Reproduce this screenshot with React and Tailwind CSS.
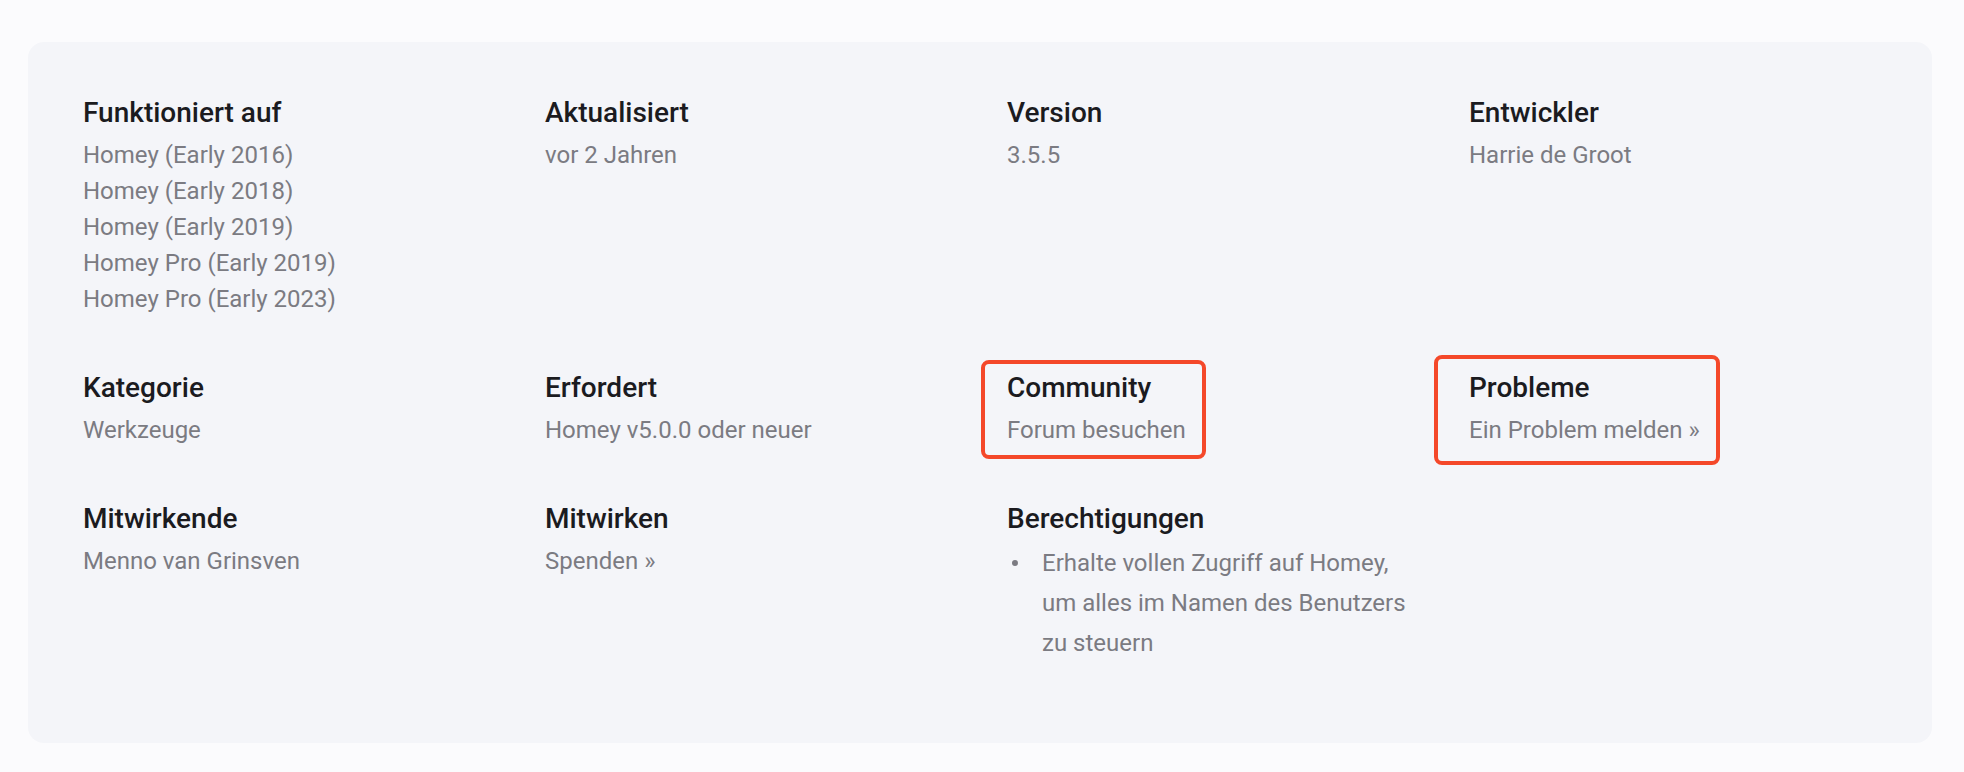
import React from 'react';

const rows = [
  [
    { title: 'Funktioniert auf', lines: ['Homey (Early 2016)', 'Homey (Early 2018)', 'Homey (Early 2019)', 'Homey Pro (Early 2019)', 'Homey Pro (Early 2023)'] },
    { title: 'Aktualisiert', lines: ['vor 2 Jahren'] },
    { title: 'Version', lines: ['3.5.5'] },
    { title: 'Entwickler', lines: ['Harrie de Groot'] },
  ],
  [
    { title: 'Kategorie', lines: ['Werkzeuge'] },
    { title: 'Erfordert', lines: ['Homey v5.0.0 oder neuer'] },
    { title: 'Community', lines: ['Forum besuchen'], mark: 'community' },
    { title: 'Probleme', lines: ['Ein Problem melden »'], mark: 'issues' },
  ],
  [
    { title: 'Mitwirkende', lines: ['Menno van Grinsven'] },
    { title: 'Mitwirken', lines: ['Spenden »'] },
    { title: 'Berechtigungen', list: ['Erhalte vollen Zugriff auf Homey, um alles im Namen des Benutzers zu steuern'] },
    null,
  ],
];

const InfoItem = ({ item }) => {
  if (!item) return <div />;
  return (
    <div className="relative">
      {item.mark === 'community' && (
        <div className="absolute left-[-26px] top-[-11px] w-[225px] h-[99px] border-[4px] border-[#f4482a] rounded-[8px] pointer-events-none" />
      )}
      {item.mark === 'issues' && (
        <div className="absolute left-[-35px] top-[-16px] w-[286px] h-[110px] border-[4px] border-[#f4482a] rounded-[8px] pointer-events-none" />
      )}
      <h3 className="text-[28px] leading-[34px] font-medium text-[#1b1b1f] mb-[7px]">{item.title}</h3>
      {item.lines &&
        item.lines.map((line) => (
          <p key={line} className="text-[24px] leading-[36px] text-[#7b7b82]">
            {line}
          </p>
        ))}
      {item.list && (
        <ul className="mt-[2px]">
          {item.list.map((entry) => (
            <li key={entry} className="flex items-start text-[24px] leading-[40px] text-[#7b7b82]">
              <span className="w-[35px] shrink-0 flex h-[40px] items-center pl-[5px]">
                <span className="w-[6px] h-[6px] rounded-full bg-[#7b7b82]" />
              </span>
              <span>{entry}</span>
            </li>
          ))}
        </ul>
      )}
    </div>
  );
};

export default function App() {
  return (
    <div className="min-h-screen bg-[#fbfbfd] pt-[42px] px-[28px] pb-[29px]" style={{ fontFamily: 'Roboto, "Noto Sans", sans-serif' }}>
      <div className="w-[1904px] bg-[#f4f5f9] rounded-[16px] pt-[54px] pl-[55px] pr-[55px] pb-[80px]">
        <div className="grid grid-cols-4 gap-x-[54px] gap-y-[54px]">
          {rows.flat().map((item, i) => (
            <InfoItem key={i} item={item} />
          ))}
        </div>
      </div>
    </div>
  );
}
